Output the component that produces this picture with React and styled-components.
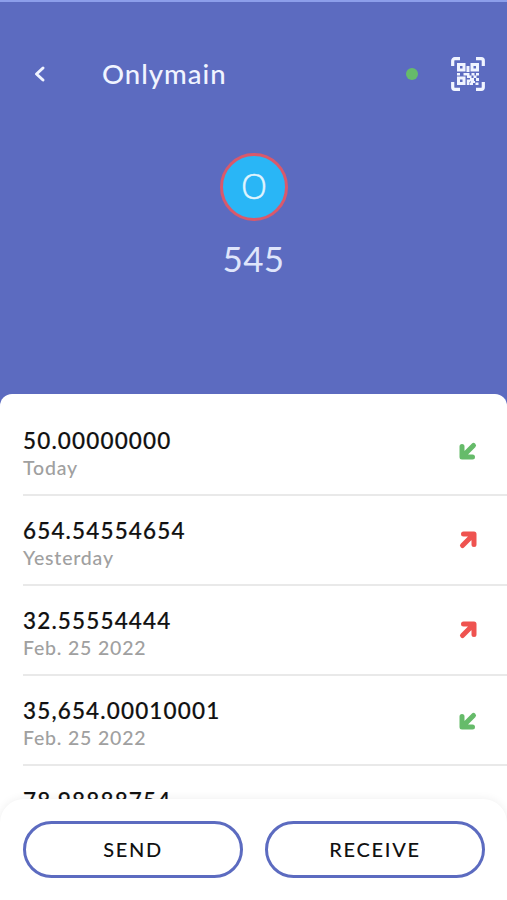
import React from 'react';
import styled, { createGlobalStyle } from 'styled-components';

const GlobalStyle = createGlobalStyle`
  * {
    box-sizing: border-box;
  }

  body {
    margin: 0;
    font-family: Lato, 'Open Sans', sans-serif;
    background-color: #5c6bc0;
  }

  button {
    padding: 0;
    border: none;
    background: none;
    font-family: inherit;
    cursor: pointer;
  }
`

const Screen = styled.div`
  display: flex;
  flex-direction: column;
  height: 900px;
  overflow: hidden;
  border-top: 2px solid #8c9eea;
  background-color: #5c6bc0;
`

const Header = styled.header`
  display: flex;
  align-items: center;
  height: 72px;
  margin-top: 36px;
  padding: 0 22px 0 33px;
`

const IconButton = styled.button`
  display: flex;

  svg {
    display: block;
  }
`

const Title = styled.h1`
  flex: 1;
  margin: 0 0 0 55px;
  color: #f0f4ff;
  font-size: 27.5px;
  font-weight: 500;
  line-height: 36px;
  letter-spacing: 1px;
`

const Status = styled.span`
  width: 12px;
  height: 12px;
  margin-right: 33px;
  border-radius: 50%;
  background-color: #66bb6a;
`

const Summary = styled.section`
  display: flex;
  flex-direction: column;
  align-items: center;
  height: 284px;
  padding-top: 43px;
`

const Avatar = styled.div`
  display: flex;
  align-items: center;
  justify-content: center;
  width: 68px;
  height: 68px;
  padding: 0 0 3px 1px;
  border: 3px solid #d9596b;
  border-radius: 50%;
  background-color: #29b6f6;
  color: #e1f5fe;
  font-family: 'Open Sans', Lato, sans-serif;
  font-size: 34px;
  font-weight: 300;
  line-height: 34px;
  -webkit-text-stroke: 0.5px #e1f5fe;
`

const Balance = styled.div`
  margin-top: 16px;
  color: #dfe5fb;
  font-size: 35px;
  line-height: 42px;
  letter-spacing: 0.4px;
`

const Panel = styled.main`
  display: flex;
  flex: 1;
  flex-direction: column;
  min-height: 0;
  border-radius: 12px 12px 0 0;
  background-color: #ffffff;
  overflow: hidden;
`

const List = styled.ul`
  flex: 1;
  min-height: 0;
  margin: 0;
  padding: 12px 0 0 23px;
  list-style: none;
  overflow: hidden;
`

const Row = styled.li`
  display: flex;
  justify-content: space-between;
  height: 90px;
  padding: 20px 29px 0 0;
  border-bottom: 2px solid #e9e9e9;
`

const Amount = styled.div`
  padding-top: 1px;
  color: #111111;
  font-size: 22.5px;
  font-weight: 500;
  line-height: 27px;
  letter-spacing: 1.15px;
  -webkit-text-stroke: 0.2px #111111;
`

const Day = styled.div`
  color: #a0a0a0;
  font-size: 19.5px;
  font-weight: 500;
  line-height: 28px;
  letter-spacing: 0.8px;
`

const Arrow = styled.svg`
  display: block;
  margin-top: ${({ $sent }) => $sent ? '14px' : '15px'};
  color: ${({ $sent }) => $sent ? '#ef5350' : '#66bb6a'};
  transform: ${({ $sent }) => $sent ? 'rotate(180deg)' : 'none'};
`

const Actions = styled.footer`
  display: flex;
  gap: 22px;
  height: 101px;
  padding: 22px 22px 0 23px;
  border-radius: 24px 24px 0 0;
  background-color: #ffffff;
  box-shadow: 0 0 10px rgba(0, 0, 0, 0.07);
  z-index: 1;
`

const ActionButton = styled.button`
  && {
    flex: 1;
    height: 57px;
    padding-bottom: 2px;
    border: 3px solid #5c6bc0;
    border-radius: 29px;
    color: #111111;
    font-size: 20px;
    font-weight: 500;
    letter-spacing: 1.7px;
  }
`

const transactions = [
  { amount: '50.00000000', day: 'Today', sent: false },
  { amount: '654.54554654', day: 'Yesterday', sent: true },
  { amount: '32.55554444', day: 'Feb. 25 2022', sent: true },
  { amount: '35,654.00010001', day: 'Feb. 25 2022', sent: false },
  { amount: '78.98888754' }
];

const BackIcon = () => (
  <svg width='14' height='18' viewBox='0 0 14 18' fill='none'>
    <path d='M10 3L3.5 9L10 15' stroke='#f0f4ff' strokeWidth='3' strokeLinecap='round' strokeLinejoin='round' />
  </svg>
)

const QrIcon = () => (
  <svg width='34' height='34' viewBox='0 0 34 34' fill='none' stroke='#f0f4ff'>
    <path
      d='M1.7 9V3.7a2 2 0 0 1 2-2H9M25 1.7h5.3a2 2 0 0 1 2 2V9M32.3 25v5.3a2 2 0 0 1-2 2H25M9 32.3H3.7a2 2 0 0 1-2-2V25'
      strokeWidth='3.2'
    />
    <path d='M7.5 7.5h5.5v5.5h-5.5zM21 7.5h5.5v5.5h-5.5zM7.5 21h5.5v5.5h-5.5z' strokeWidth='3' />
    <path
      d='M15.5 9h3v6h-3zM6 16h3v2.5H6zM12.500 16h6v2.500h2V21H16v-2.500h-3.500zM20.500 16h3v2.500h-3zM25 16h3v2.500h-3zM22.500 18.500h3V21h-3zM19 21h4v3h-4zM25 21h3v3h-3zM15.800 22.500h3.700V25h-1v3h-2.700zM20 24h4v2h-2v2h-3v-2.500h1zM24.500 25.500h3v2.500h-3z'
      fill='#f0f4ff'
      stroke='none'
    />
  </svg>
)

const ArrowIcon = ({ sent }) => (
  <Arrow $sent={ sent } width='20' height='20' viewBox='0 0 20 20' fill='none'>
    <path d='M4 5.5V16H14.5M4.5 15.5L15.5 4.500' stroke='currentColor' strokeWidth='5' strokeLinecap='round' strokeLinejoin='round' />
  </Arrow>
)

const Transaction = ({ amount, day, sent }) => (
  <Row>
    <div>
      <Amount>{ amount }</Amount>
      { day && <Day>{ day }</Day> }
    </div>
    { day && <ArrowIcon sent={ sent } /> }
  </Row>
)

const App = () => (
  <>
    <GlobalStyle />
    <Screen>
      <Header>
        <IconButton aria-label='Back'><BackIcon /></IconButton>
        <Title>Onlymain</Title>
        <Status />
        <IconButton aria-label='QR code'><QrIcon /></IconButton>
      </Header>
      <Summary>
        <Avatar>O</Avatar>
        <Balance>545</Balance>
      </Summary>
      <Panel>
        <List>
          { transactions.map((item) => <Transaction key={ item.amount } { ...item } />) }
        </List>
        <Actions>
          <ActionButton>SEND</ActionButton>
          <ActionButton>RECEIVE</ActionButton>
        </Actions>
      </Panel>
    </Screen>
  </>
)

export default App;
